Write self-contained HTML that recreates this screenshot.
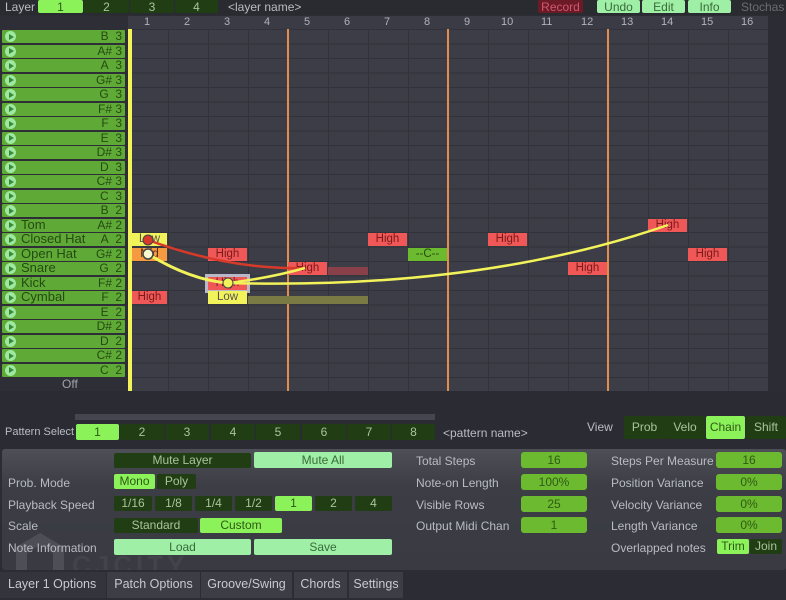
<!DOCTYPE html>
<html><head><meta charset="utf-8">
<style>
*{margin:0;padding:0;box-sizing:border-box}
body{width:786px;height:600px;overflow:hidden;background:#2c2d34;font-family:"Liberation Sans",sans-serif;position:relative;font-size:11px}
.a{position:absolute}
.t{position:absolute;color:#b9bcc4;font-size:12px;white-space:nowrap}
.b{position:absolute;text-align:center;font-size:12px;border-radius:2px;white-space:nowrap}
.dg{background:#213d14;color:#a9c49a}
.bg{background:#8cf25a;color:#2d5a14}
.mg{background:#9ff0a6;color:#3a6a3a}
.vg{background:#6cba30;color:#2f5a14;border-radius:3px}
.lab{position:absolute;left:2px;width:123px;height:13px;background:#5faa36;color:#254a12;font-size:12px;line-height:13px;border-radius:1px}
.lab i{position:absolute;left:3px;top:1px;width:11px;height:11px;border-radius:50%;background:#9ee8a0}
.lab i:after{content:"";position:absolute;left:4px;top:2.5px;border-left:5px solid #3a8a3a;border-top:3px solid transparent;border-bottom:3px solid transparent}
.lab .n{position:absolute;right:3px;top:0}
.lab .nm{position:absolute;left:19px;top:-1px;font-size:13px}
.note{position:absolute;height:13px;font-size:11.5px;line-height:13px;text-align:center}
.r{background:#f05858;color:#7a1a1a}
.y{background:#f2f25a;color:#555}
.o{background:#f59a40;color:#5a2a10}
</style></head><body>
<!-- top bar -->
<div class="a" style="left:0;top:0;width:786px;height:15px;background:#2a2b31"></div>
<div class="t" style="left:5px;top:0">Layer</div>
<div class="b bg" style="left:38px;top:0;width:45px;height:13px">1</div>
<div class="b dg" style="left:84px;top:0;width:45px;height:13px">2</div>
<div class="b dg" style="left:130px;top:0;width:44px;height:13px">3</div>
<div class="b dg" style="left:175px;top:0;width:43px;height:13px">4</div>
<div class="t" style="left:228px;top:0">&lt;layer name&gt;</div>
<div class="b" style="left:538px;top:0;width:45px;height:13px;background:#6b1a26;color:#d05870">Record</div>
<div class="b mg" style="left:597px;top:0;width:43px;height:13px">Undo</div>
<div class="b mg" style="left:642px;top:0;width:43px;height:13px">Edit</div>
<div class="b mg" style="left:688px;top:0;width:43px;height:13px">Info</div>
<div class="t" style="left:741px;top:0;color:#6a6c74">Stochas</div>
<!-- grid -->
<div class="a" style="left:128px;top:16px;width:640px;height:13px;background:#3a3b44"></div>
<div class="a" style="left:128px;top:29px;width:640px;height:362px;background-color:#3c3d47;background-image:linear-gradient(90deg,#31323a 1px,transparent 1px),linear-gradient(#31323a 1px,transparent 1px);background-size:40px 100%,100% 14.5px"></div>
<div class="a" style="left:0;top:16px;width:128px;height:375px;background:#2e2f36"></div>
<div class="a" style="left:128px;top:16px;width:640px;height:13px;font-size:11px;color:#b0b3bb">
<span class="a" style="left:16px">1</span><span class="a" style="left:56px">2</span><span class="a" style="left:96px">3</span><span class="a" style="left:136px">4</span><span class="a" style="left:176px">5</span><span class="a" style="left:216px">6</span><span class="a" style="left:256px">7</span><span class="a" style="left:296px">8</span><span class="a" style="left:336px">9</span><span class="a" style="left:373px">10</span><span class="a" style="left:413px">11</span><span class="a" style="left:453px">12</span><span class="a" style="left:493px">13</span><span class="a" style="left:533px">14</span><span class="a" style="left:573px">15</span><span class="a" style="left:613px">16</span></div>
<div class="a" style="left:287px;top:29px;width:2px;height:362px;background:#e0904a"></div>
<div class="a" style="left:447px;top:29px;width:2px;height:362px;background:#e0904a"></div>
<div class="a" style="left:607px;top:29px;width:2px;height:362px;background:#e0904a"></div>
<div class="a" style="left:128px;top:29px;width:4px;height:362px;background:#f2f25a"></div>
<!-- labels -->
<div class="lab" style="top:30px"><i></i><span class="n">B&nbsp;&nbsp;3</span></div>
<div class="lab" style="top:44.5px"><i></i><span class="n">A#&nbsp;3</span></div>
<div class="lab" style="top:59px"><i></i><span class="n">A&nbsp;&nbsp;3</span></div>
<div class="lab" style="top:73.5px"><i></i><span class="n">G#&nbsp;3</span></div>
<div class="lab" style="top:88px"><i></i><span class="n">G&nbsp;&nbsp;3</span></div>
<div class="lab" style="top:102.5px"><i></i><span class="n">F#&nbsp;3</span></div>
<div class="lab" style="top:117px"><i></i><span class="n">F&nbsp;&nbsp;3</span></div>
<div class="lab" style="top:131.5px"><i></i><span class="n">E&nbsp;&nbsp;3</span></div>
<div class="lab" style="top:146px"><i></i><span class="n">D#&nbsp;3</span></div>
<div class="lab" style="top:160.5px"><i></i><span class="n">D&nbsp;&nbsp;3</span></div>
<div class="lab" style="top:175px"><i></i><span class="n">C#&nbsp;3</span></div>
<div class="lab" style="top:189.5px"><i></i><span class="n">C&nbsp;&nbsp;3</span></div>
<div class="lab" style="top:204px"><i></i><span class="n">B&nbsp;&nbsp;2</span></div>
<div class="lab" style="top:218.5px"><i></i><span class="nm">Tom</span><span class="n">A#&nbsp;2</span></div>
<div class="lab" style="top:233px"><i></i><span class="nm">Closed Hat</span><span class="n">A&nbsp;&nbsp;2</span></div>
<div class="lab" style="top:247.5px"><i></i><span class="nm">Open Hat</span><span class="n">G#&nbsp;2</span></div>
<div class="lab" style="top:262px"><i></i><span class="nm">Snare</span><span class="n">G&nbsp;&nbsp;2</span></div>
<div class="lab" style="top:276.5px"><i></i><span class="nm">Kick</span><span class="n">F#&nbsp;2</span></div>
<div class="lab" style="top:291px"><i></i><span class="nm">Cymbal</span><span class="n">F&nbsp;&nbsp;2</span></div>
<div class="lab" style="top:305.5px"><i></i><span class="n">E&nbsp;&nbsp;2</span></div>
<div class="lab" style="top:320px"><i></i><span class="n">D#&nbsp;2</span></div>
<div class="lab" style="top:334.5px"><i></i><span class="n">D&nbsp;&nbsp;2</span></div>
<div class="lab" style="top:349px"><i></i><span class="n">C#&nbsp;2</span></div>
<div class="lab" style="top:363.5px"><i></i><span class="n">C&nbsp;&nbsp;2</span></div>
<div class="t" style="left:62px;top:377px;color:#a0a3aa">Off</div>
<!-- notes -->
<div class="note y" style="left:132px;top:233px;width:35px">Low</div>
<div class="note o" style="left:132px;top:247.5px;width:35px">Mid</div>
<div class="note r" style="left:132px;top:291px;width:35px">High</div>
<div class="note r" style="left:208px;top:247.5px;width:39px">High</div>
<div class="note r" style="left:208px;top:276.5px;width:39px;box-shadow:0 0 0 3px #b8b8c8">High</div>
<div class="note y" style="left:208px;top:291px;width:39px">Low</div>
<div class="a" style="left:248px;top:296px;width:120px;height:8px;background:#7a7a45"></div>
<div class="note r" style="left:288px;top:262px;width:39px">High</div>
<div class="a" style="left:328px;top:267px;width:40px;height:8px;background:#8a4048"></div>
<div class="note r" style="left:368px;top:233px;width:39px">High</div>
<div class="note" style="left:408px;top:247.5px;width:39px;background:#6cba30;color:#2a4a14">--C--</div>
<div class="note r" style="left:488px;top:233px;width:39px">High</div>
<div class="note r" style="left:568px;top:262px;width:39px">High</div>
<div class="note r" style="left:648px;top:218.5px;width:39px">High</div>
<div class="note r" style="left:688px;top:247.5px;width:39px">High</div>
<svg class="a" style="left:0;top:0" width="786" height="400">
<path d="M148 240 Q230 270 305 268" stroke="#d83a2a" stroke-width="2.5" fill="none"/>
<path d="M148 254 Q190 280 228 283" stroke="#f2f25a" stroke-width="3" fill="none"/>
<path d="M228 283 Q270 278 305 268" stroke="#f2f25a" stroke-width="2.5" fill="none"/>
<path d="M228 283 Q480 290 668 225" stroke="#f2f25a" stroke-width="2.5" fill="none"/>
<circle cx="148" cy="240" r="5" fill="#d83a2a" stroke="#444" stroke-width="1"/>
<circle cx="148" cy="254" r="5" fill="#f8f8d0" stroke="#444" stroke-width="1.5"/>
<circle cx="228" cy="283" r="5" fill="#f2f25a" stroke="#444" stroke-width="1"/>
</svg>
<!-- pattern select -->
<div class="a" style="left:0;top:391px;width:786px;height:58px;background:#2b2c33"></div>
<div class="a" style="left:75px;top:414px;width:360px;height:6px;background:#454650"></div>
<div class="t" style="left:5px;top:426px;font-size:11px">Pattern Select</div>
<div class="b bg" style="left:76px;top:424px;width:43px;height:16px;line-height:16px">1</div>
<div class="b dg" style="left:120px;top:424px;width:44px;height:16px;line-height:16px">2</div>
<div class="b dg" style="left:165px;top:424px;width:44px;height:16px;line-height:16px">3</div>
<div class="b dg" style="left:211px;top:424px;width:44px;height:16px;line-height:16px">4</div>
<div class="b dg" style="left:256px;top:424px;width:44px;height:16px;line-height:16px">5</div>
<div class="b dg" style="left:302px;top:424px;width:44px;height:16px;line-height:16px">6</div>
<div class="b dg" style="left:347px;top:424px;width:44px;height:16px;line-height:16px">7</div>
<div class="b dg" style="left:392px;top:424px;width:43px;height:16px;line-height:16px">8</div>
<div class="t" style="left:443px;top:426px">&lt;pattern name&gt;</div>
<div class="t" style="left:587px;top:420px;font-size:12px">View</div>
<div class="b dg" style="left:624px;top:416px;width:41px;height:23px;line-height:23px">Prob</div>
<div class="b dg" style="left:665px;top:416px;width:40px;height:23px;line-height:23px">Velo</div>
<div class="b bg" style="left:706px;top:416px;width:39px;height:23px;line-height:23px">Chain</div>
<div class="b dg" style="left:746px;top:416px;width:40px;height:23px;line-height:23px">Shift</div>
<!-- options panel -->
<div class="a" style="left:2px;top:449px;width:784px;height:121px;background:linear-gradient(#4e4f57,#3c3d45 30%,#393a42);border-radius:3px"></div>
<div class="b dg" style="left:114px;top:453px;width:137px;height:15px;line-height:15px">Mute Layer</div>
<div class="b mg" style="left:254px;top:452px;width:138px;height:16px;line-height:16px">Mute All</div>
<div class="t" style="left:8px;top:476px">Prob. Mode</div>
<div class="b bg" style="left:114px;top:474px;width:41px;height:15px;line-height:15px">Mono</div>
<div class="b dg" style="left:157px;top:474px;width:39px;height:15px;line-height:15px">Poly</div>
<div class="t" style="left:8px;top:498px">Playback Speed</div>
<div class="b dg" style="left:114px;top:496px;width:38px;height:15px;line-height:15px">1/16</div>
<div class="b dg" style="left:155px;top:496px;width:37px;height:15px;line-height:15px">1/8</div>
<div class="b dg" style="left:195px;top:496px;width:37px;height:15px;line-height:15px">1/4</div>
<div class="b dg" style="left:235px;top:496px;width:37px;height:15px;line-height:15px">1/2</div>
<div class="b bg" style="left:275px;top:496px;width:37px;height:15px;line-height:15px">1</div>
<div class="b dg" style="left:315px;top:496px;width:37px;height:15px;line-height:15px">2</div>
<div class="b dg" style="left:355px;top:496px;width:37px;height:15px;line-height:15px">4</div>
<div class="t" style="left:8px;top:519px">Scale</div>
<div class="b dg" style="left:114px;top:518px;width:84px;height:15px;line-height:15px">Standard</div>
<div class="b bg" style="left:200px;top:518px;width:82px;height:15px;line-height:15px">Custom</div>
<!-- watermark -->
<svg class="a" style="left:12px;top:530px" width="56" height="66"><path d="M28 3 L52 17 L52 47 L28 61 L4 47 L4 17 Z M28 15 L41 23 L41 41 L28 49 L15 41 L15 23 Z" fill="#55565e" fill-rule="evenodd" opacity="0.75"/></svg>
<div class="a" style="left:72px;top:550px;font-size:26px;font-weight:bold;letter-spacing:4px;color:#45464e;opacity:.8">CJCITY</div>
<div class="t" style="left:8px;top:541px">Note Information</div>
<div class="b mg" style="left:114px;top:539px;width:137px;height:16px;line-height:16px">Load</div>
<div class="b mg" style="left:254px;top:539px;width:138px;height:16px;line-height:16px">Save</div>
<div class="t" style="left:416px;top:454px">Total Steps</div>
<div class="t" style="left:416px;top:476px">Note-on Length</div>
<div class="t" style="left:416px;top:498px">Visible Rows</div>
<div class="t" style="left:416px;top:519px">Output Midi Chan</div>
<div class="b vg" style="left:521px;top:452px;width:66px;height:16px;line-height:16px">16</div>
<div class="b vg" style="left:521px;top:474px;width:66px;height:16px;line-height:16px">100%</div>
<div class="b vg" style="left:521px;top:496px;width:66px;height:16px;line-height:16px">25</div>
<div class="b vg" style="left:521px;top:517px;width:66px;height:16px;line-height:16px">1</div>
<div class="t" style="left:611px;top:454px">Steps Per Measure</div>
<div class="t" style="left:611px;top:476px">Position Variance</div>
<div class="t" style="left:611px;top:498px">Velocity Variance</div>
<div class="t" style="left:611px;top:519px">Length Variance</div>
<div class="t" style="left:611px;top:541px">Overlapped notes</div>
<div class="b vg" style="left:716px;top:452px;width:66px;height:16px;line-height:16px">16</div>
<div class="b vg" style="left:716px;top:474px;width:66px;height:16px;line-height:16px">0%</div>
<div class="b vg" style="left:716px;top:496px;width:66px;height:16px;line-height:16px">0%</div>
<div class="b vg" style="left:716px;top:517px;width:66px;height:16px;line-height:16px">0%</div>
<div class="b bg" style="left:717px;top:539px;width:32px;height:15px;line-height:15px">Trim</div>
<div class="b dg" style="left:750px;top:539px;width:32px;height:15px;line-height:15px">Join</div>
<!-- tabs -->
<div class="a" style="left:0;top:570px;width:786px;height:30px;background:#2c2d34"></div>
<div class="t" style="left:0;top:572px;width:106px;height:26px;background:#34353c;line-height:24px;padding-left:8px;font-size:12.5px;color:#c8cad0">Layer 1 Options</div>
<div class="t" style="left:107px;top:572px;width:93px;height:26px;background:#3c3d45;line-height:24px;text-align:center;font-size:12.5px;color:#c8cad0">Patch Options</div>
<div class="t" style="left:201px;top:572px;width:91px;height:26px;background:#3c3d45;line-height:24px;text-align:center;font-size:12.5px;color:#c8cad0">Groove/Swing</div>
<div class="t" style="left:294px;top:572px;width:53px;height:26px;background:#3c3d45;line-height:24px;text-align:center;font-size:12.5px;color:#c8cad0">Chords</div>
<div class="t" style="left:349px;top:572px;width:54px;height:26px;background:#3c3d45;line-height:24px;text-align:center;font-size:12.5px;color:#c8cad0">Settings</div>
</body></html>
